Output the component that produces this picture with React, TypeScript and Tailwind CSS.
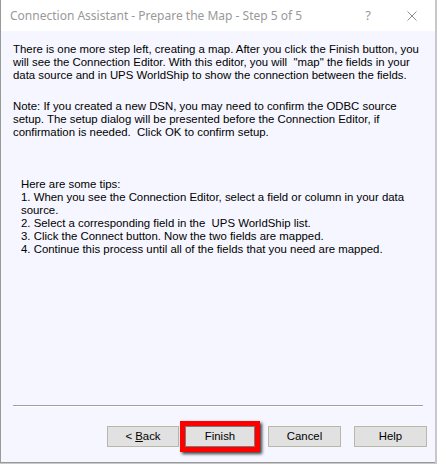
export default function App() {
  const body = { fontFamily: '"Liberation Sans", Arial, sans-serif' };
  return (
    <div className="w-[437px] h-[464px] bg-[#c8c8c8] relative overflow-hidden">
      <div className="w-[435px] h-[463px] flex flex-col border-l border-b border-[#9a9a9a] bg-[#f5f6ff]">
        {/* title bar */}
        <div className="h-[31px] bg-white flex items-center shrink-0">
          <span
            className="ml-[9px] text-[12px] text-[#999999] whitespace-nowrap"
            style={{ fontFamily: '"Noto Sans", "Open Sans", sans-serif' }}
          >
            Connection Assistant - Prepare the Map - Step 5 of 5
          </span>
          <span
            className="ml-auto mr-[36px] text-[13px] text-[#999999]"
            style={{ fontFamily: '"Noto Sans", sans-serif' }}
          >
            ?
          </span>
          <svg width="10" height="10" viewBox="0 0 10 10" className="mr-[18px]">
            <path d="M0.5 0.5 L9.5 9.5 M9.5 0.5 L0.5 9.5" stroke="#8a8a8a" strokeWidth="1" />
          </svg>
        </div>

        {/* content */}
        <div className="flex-1 flex flex-col text-[11.4px] leading-[13px] text-black" style={body}>
          <p className="mt-[12px] ml-[12px] whitespace-nowrap">
            There is one more step left, creating a map. After you click the Finish button, you
            <br />
            will see the Connection Editor. With this editor, you will &nbsp;"map" the fields in your
            <br />
            data source and in UPS WorldShip to show the connection between the fields.
          </p>
          <p className="mt-[18px] ml-[12px] whitespace-nowrap">
            Note: If you created a new DSN, you may need to confirm the ODBC source
            <br />
            setup. The setup dialog will be presented before the Connection Editor, if
            <br />
            confirmation is needed. &nbsp;Click OK to confirm setup.
          </p>
          <div className="mt-[39px] ml-[20px] whitespace-nowrap">
            <div>Here are some tips:</div>
            <div>1. When you see the Connection Editor, select a field or column in your data</div>
            <div>source.</div>
            <div>2. Select a corresponding field in the &nbsp;UPS WorldShip list.</div>
            <div>3. Click the Connect button. Now the two fields are mapped.</div>
            <div>4. Continue this process until all of the fields that you need are mapped.</div>
          </div>

          <div className="flex-1" />

          <div className="mx-[12px] h-px bg-[#a0a0a0] border-b border-white box-content" />

          <div className="mt-[14px] mb-[10px] flex items-center">
            <button className="ml-[106px] w-[72px] h-[21px] bg-[#e1e1e1] border border-[#b9b8a4] text-[11.4px]">
              &lt; <u>B</u>ack
            </button>
            <div className="ml-[1px] p-[5px] relative">
              <div className="absolute inset-0 border-[5px] border-[#ff0000] shadow-[2px_2px_3px_rgba(0,0,0,0.75)]" />
              <button className="w-[70px] h-[21px] bg-[#e1e1e1] border border-[#7a7a7a] text-[11.4px]">
                Finish
              </button>
            </div>
            <button className="ml-[8px] w-[73px] h-[21px] bg-[#e1e1e1] border border-[#b9b8a4] text-[11.4px]">
              Cancel
            </button>
            <button className="ml-[13px] w-[73px] h-[21px] bg-[#e1e1e1] border border-[#b9b8a4] text-[11.4px]">
              Help
            </button>
          </div>
        </div>
      </div>
    </div>
  );
}
